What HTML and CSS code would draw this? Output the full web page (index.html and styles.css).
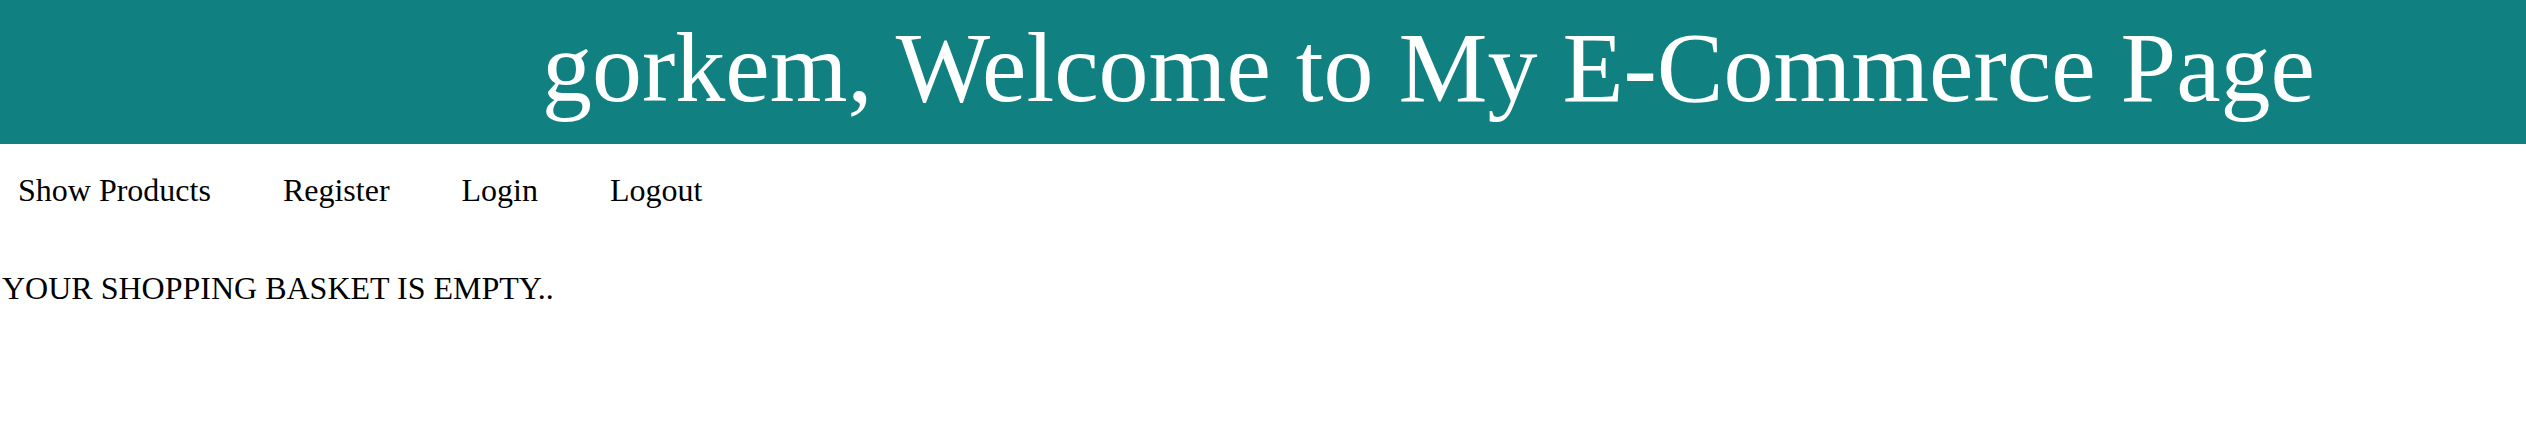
FILE: index.html
```html
<!DOCTYPE html>
<html>
<head>
<meta charset="utf-8">
<link rel="stylesheet" href="styles.css">
</head>
<body>
<header class="header">
  <h1 class="title">gorkem, Welcome to My E-Commerce Page</h1>
</header>
<nav class="nav">
  <a class="nav-link" href="#">Show Products</a>
  <a class="nav-link" href="#">Register</a>
  <a class="nav-link" href="#">Login</a>
  <a class="nav-link" href="#">Logout</a>
</nav>
<p class="basket">YOUR SHOPPING BASKET IS EMPTY..</p>
</body>
</html>
```
FILE: styles.css
```css
body {
  margin: 0;
  font-family: "Liberation Serif", "Times New Roman", serif;
  background: #ffffff;
  color: #000000;
}
.header {
  background: #118080;
  height: 144px;
  box-sizing: border-box;
  padding: 10px 0 0 542px;
}
.title {
  margin: 0;
  font-size: 100px;
  font-weight: normal;
  color: #ffffff;
  line-height: normal;
}
.nav {
  display: flex;
  gap: 72px;
  padding: 0 0 0 18px;
  margin-top: 28px;
}
.nav-link {
  font-size: 32px;
  color: #000000;
  text-decoration: none;
}
.basket {
  margin: 61px 0 0 2px;
  font-size: 32px;
}
```
